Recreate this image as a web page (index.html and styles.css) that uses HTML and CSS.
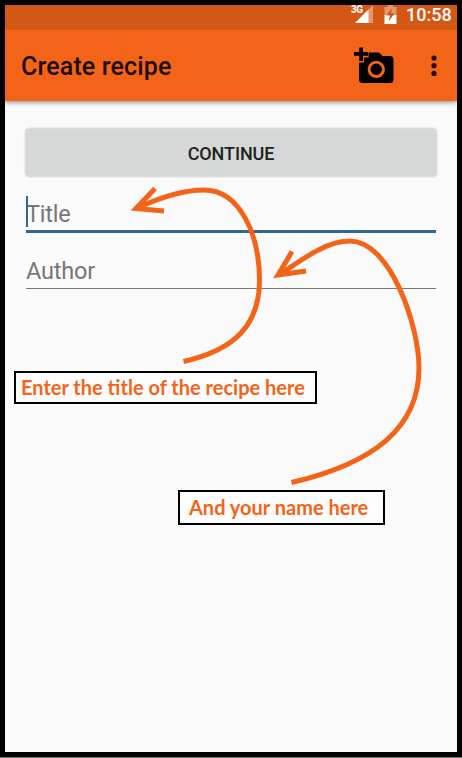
FILE: index.html
```html
<!DOCTYPE html>
<html lang="en">
<head>
<meta charset="utf-8">
<title>Create recipe</title>
<link rel="stylesheet" href="styles.css">
</head>
<body>
<div class="phone">
  <div class="status">
    <svg class="signal" width="24" height="20" viewBox="0 0 24 20">
      <path d="M22 0V18H4Z" fill="#e5986c"/>
      <path d="M17.500 4.500V18H4Z" fill="#fff"/>
    </svg>
    <span class="network">3G</span>
    <svg class="battery" width="13" height="19" viewBox="0 0 13 19">
      <path d="M4 0H9V2H12.500V10H.5V2H4Z" fill="#e5986c"/>
      <path d="M.5 10H12.500V19H.5Z" fill="#fff"/>
      <path d="M8 3L2.500 10.500H6L4.500 16.500L10.500 8.500H7Z" fill="#d45815"/>
    </svg>
    <span class="clock">10:58</span>
  </div>
  <header class="bar">
    <h1 class="heading">Create recipe</h1>
    <svg class="camera" width="40" height="37" viewBox="0 0 40 37">
      <path d="M14.500 5.500H25L28.500 9H36Q39.500 9 39.500 12.500V32.500Q39.500 36 36 36H9Q5 36 5 32.500V15.500H10V10.500H14.500Z"/>
      <path d="M5.200 .5H9V5H14V8.800H9V14H5.200V8.800H0V5H5.200Z"/>
      <circle cx="22.300" cy="22.300" r="7.200" fill="none" stroke="#f36419" stroke-width="2.900"/>
    </svg>
    <svg class="more" width="6" height="22" viewBox="0 0 6 22">
      <circle cx="3" cy="3" r="2.600"/><circle cx="3" cy="10.700" r="2.600"/><circle cx="3" cy="18.400" r="2.600"/>
    </svg>
  </header>
  <main class="form">
    <button class="continue">CONTINUE</button>
    <div class="field active"><span class="hint">Title</span></div>
    <div class="field"><span class="hint">Author</span></div>
  </main>
  <svg class="arrows" width="462" height="758" viewBox="0 0 462 758">
    <path d="M183.500 361.500C235 350 259.500 325 259.500 280C259.500 235 240 190 204 190C182 190 159 198 137 208"/>
    <path d="M155 188.500L136 208.500L164 211"/>
    <path d="M291.500 482.500C375 463 419 427 419 368C419 325 390 241 350 241C326 241 303 259 279 275"/>
    <path d="M292 251.500L278 275L306 271"/>
  </svg>
  <div class="note note-title"><span>Enter the title of the recipe here</span></div>
  <div class="note note-author"><span>And your name here</span></div>
</div>
</body>
</html>
```
FILE: styles.css
```css
* { box-sizing: border-box; }
body { margin: 0; background: #777; font-family: Roboto, sans-serif; }
.phone {
  position: relative;
  width: 462px;
  height: 757px;
  border: 5px solid #000;
  background: #fafafa;
  overflow: hidden;
}
.status {
  position: relative;
  display: flex;
  height: 25px;
  padding-right: 6px;
  justify-content: flex-end;
  background: #d45815;
  color: #fff;
}
.network { position: absolute; left: 346px; top: 0; font-size: 10px; line-height: 10px; font-weight: 700; letter-spacing: -.5px; }
.signal { margin-right: 9px; }
.battery { margin-right: 9px; }
.clock { font-size: 18px; line-height: 20px; font-weight: 500; width: 45px; white-space: nowrap; }
.bar {
  display: flex;
  height: 71px;
  padding: 0 20px 0 16px;
  align-items: center;
  background: #f36419;
  box-shadow: 0 1px 5px rgba(0, 0, 0, .5);
}
.heading { margin: 2px auto 0 0; font-size: 25px; line-height: 30px; font-weight: 500; letter-spacing: .15px; color: #1e0d03; }
.camera { margin-right: 37px; }
.more { fill: #1e0d03; }
.form { padding: 28px 16px 0 21px; }
.continue {
  display: block;
  width: 410px;
  height: 47px;
  padding: 2px 0 0;
  border: 0;
  border-radius: 3px;
  background: #d6d8d7;
  box-shadow: 0 0 3px rgba(0, 0, 0, .35);
  font: 500 18px/20px Roboto, sans-serif;
  letter-spacing: -.1px;
  color: #212121;
}
.field {
  position: relative;
  width: 410px;
  height: 56px;
  border-bottom: 1px solid #777;
}
.field.active { height: 57px; border-bottom: 3px solid #32658f; }
.hint { display: block; padding-top: 24px; font-size: 23.5px; line-height: 28px; letter-spacing: -.2px; color: #777; }
.active::before { content: ""; position: absolute; left: 0; top: 20px; width: 2px; height: 31px; background: #32658f; }
.arrows { position: absolute; left: -5px; top: -5px; fill: none; stroke: #f36419; stroke-width: 5; }
.note {
  position: absolute;
  display: flex;
  align-items: center;
  border: 2px solid #000;
  background: #fdfdfd;
  font: 700 20px/24px Lato, sans-serif;
  color: #f36419;
  white-space: nowrap;
}
.note span { position: relative; top: -1px; }
.note-title { left: 9px; top: 366px; width: 303px; height: 33px; padding-left: 5px; }
.note-author { left: 173px; top: 485px; width: 207px; height: 35px; padding-left: 9px; }
```
